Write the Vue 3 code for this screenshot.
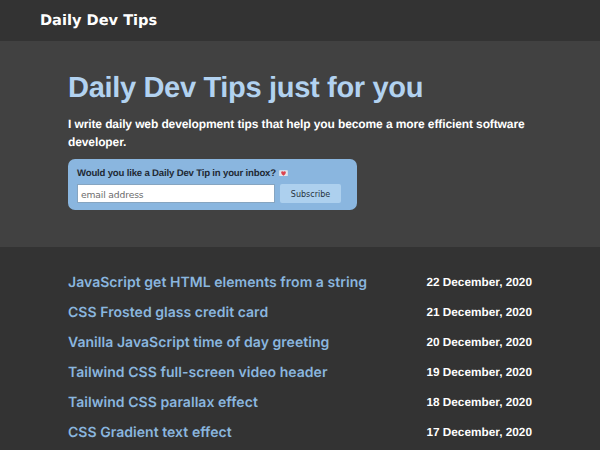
<script setup>
const posts = [
  { title: 'JavaScript get HTML elements from a string', date: '22 December, 2020' },
  { title: 'CSS Frosted glass credit card', date: '21 December, 2020' },
  { title: 'Vanilla JavaScript time of day greeting', date: '20 December, 2020' },
  { title: 'Tailwind CSS full-screen video header', date: '19 December, 2020' },
  { title: 'Tailwind CSS parallax effect', date: '18 December, 2020' },
  { title: 'CSS Gradient text effect', date: '17 December, 2020' },
]
</script>

<template>
  <div class="page">
    <header class="topbar"><a class="brand">Daily Dev Tips</a></header>
    <section class="hero">
      <h1>Daily Dev Tips just for you</h1>
      <p class="intro"><span>I write daily web development tips that help you become a more efficient software</span> developer.</p>
      <form class="signup" @submit.prevent>
        <label class="question" for="email">
          <span>Would you like a Daily Dev Tip in your inbox?</span>
          <svg class="letter" viewBox="0 0 20 14" aria-hidden="true">
            <rect x="0.5" y="0.5" width="19" height="13" rx="1.5" fill="#e6e9ee" />
            <path d="M1 1.5 L10 9 L19 1.5 M1 13 L7 7 M19 13 L13 7" fill="none" stroke="#d0d5dd" stroke-width="1" />
            <path d="M10 12.4 C7 10 4.8 8 4.8 5.3 C4.8 2 8.8 1.6 10 3.8 C11.2 1.6 15.2 2 15.2 5.3 C15.2 8 13 10 10 12.4Z" fill="#dc4450" />
          </svg>
        </label>
        <div class="fields">
          <input id="email" type="email" placeholder="email address" />
          <button type="submit">Subscribe</button>
        </div>
      </form>
    </section>
    <main class="posts">
      <article v-for="post in posts" :key="post.title" class="post">
        <a class="title">{{ post.title }}</a>
        <time class="date">{{ post.date }}</time>
      </article>
    </main>
  </div>
</template>

<style>
body {
  margin: 0;
  overflow: hidden;
  background: #333;
}
</style>

<style scoped>
.page {
  box-sizing: border-box;
  height: 450px;
  overflow: hidden;
  background: #333;
  color: #fff;
  font-family: "Liberation Sans", Arial, sans-serif;
  text-rendering: geometricPrecision;
}
.topbar {
  display: flex;
  align-items: center;
  box-sizing: border-box;
  height: 41px;
  padding: 1px 40px 0;
}
.brand {
  font: bold 14.6px/20px "DejaVu Sans", Verdana, sans-serif;
  white-space: nowrap;
}
.hero {
  box-sizing: border-box;
  height: 206px;
  padding: 29px 68px 0;
  background: #414141;
}
h1 {
  margin: 0;
  color: #b2d2f0;
  font-size: 29.1px;
  line-height: 36px;
  letter-spacing: -0.36px;
  white-space: nowrap;
}
.intro {
  margin: 9px 0 0;
  font-size: 12px;
  font-weight: bold;
  line-height: 18px;
  letter-spacing: -0.11px;
}
.intro span {
  white-space: nowrap;
}
.signup {
  box-sizing: border-box;
  width: 289px;
  height: 51px;
  margin-top: 8px;
  padding: 7px 9px 5px;
  border-radius: 7px;
  background: #8ab6df;
}
.question {
  display: flex;
  align-items: center;
  gap: 3px;
  height: 14px;
  color: #1f2a35;
  font-size: 9.6px;
  font-weight: bold;
  letter-spacing: -0.18px;
  white-space: nowrap;
}
.letter {
  width: 9px;
  height: 6.5px;
}
.fields {
  display: flex;
  gap: 5px;
  margin-top: 4px;
}
input {
  box-sizing: border-box;
  width: 198px;
  height: 19px;
  padding: 2px 3px 0;
  border: 1px solid #86a5c1;
  border-radius: 0;
  background: #fff;
  font: 9.2px "DejaVu Sans", Verdana, sans-serif;
  letter-spacing: -0.15px;
}
input::placeholder {
  color: #6c6c6c;
  opacity: 1;
}
button {
  box-sizing: border-box;
  width: 61px;
  height: 19px;
  padding: 2px 0 0;
  border: 0;
  border-radius: 2px;
  background: #add0ee;
  color: #26323d;
  font: 8px "DejaVu Sans", Verdana, sans-serif;
}
.posts {
  padding: 20.4px 68px 0;
}
.post {
  display: flex;
  align-items: center;
  justify-content: space-between;
  height: 29.9px;
  white-space: nowrap;
}
.title {
  padding-top: 2px;
  color: #8ab6df;
  font: 600 14px/20px Inter, sans-serif;
  letter-spacing: 0.04px;
}
.date {
  font-size: 11.8px;
  font-weight: bold;
}
</style>
